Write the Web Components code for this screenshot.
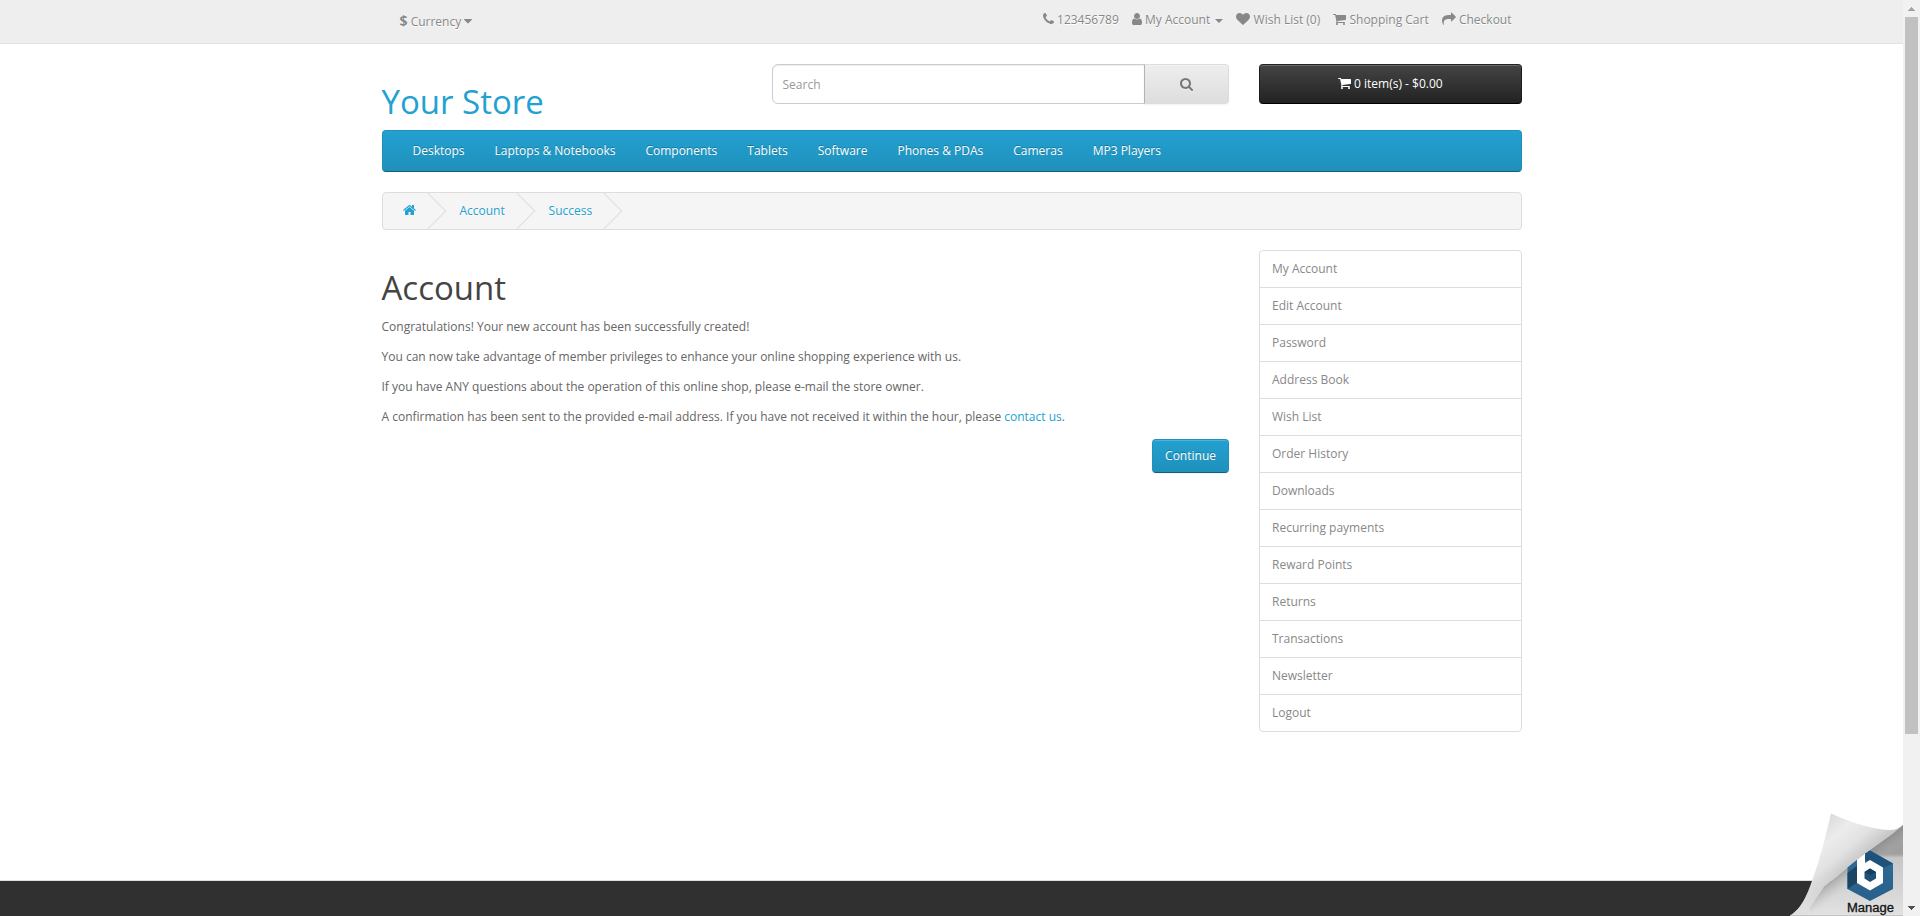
<!DOCTYPE html>
<html lang="en">
<head>
<meta charset="utf-8">
<title>Your Account Has Been Created!</title>
<style>
html,body{margin:0;padding:0;height:916px;overflow:hidden;background:#fff}
body{font:400 12px/20px "Open Sans",sans-serif;color:#666}
</style>
</head>
<body>
<store-page></store-page>
<script>
const ICONS = {
  phone:[192,1408,"M1600 1240q0 27-10 70.5t-21 68.5q-21 50-122 106-94 51-186 51-27 0-53-3.5t-57.5-12.5-47-14.5-55.5-20.5-49-18q-98-35-175-83-127-79-264-216t-216-264q-48-77-83-175-3-9-18-49t-20.5-55.5-14.5-47-12.5-57.5-3.5-53q0-92 51-186 56-101 106-122 25-11 68.5-21t70.5-10q14 0 21 3 18 6 53 76 11 19 30 54t35 63.5 31 53.5q3 4 17.5 25t21.5 35.5 7 28.5q0 20-28.5 50t-62 55-62 53-28.5 46q0 9 5 22.5t8.5 20.5 14 24 11.5 19q76 137 174 235t235 174q2 1 19 11.5t24 14 20.5 8.5 22.5 5q18 0 46-28.5t53-62 55-62 50-28.5q14 0 28.5 7t35.5 21.5 25 17.5q25 15 53.5 31t63.5 35 54 30q70 35 76 53 3 7 3 21z"],
  user:[256,1280,"M1536 1399q0 109-62.5 187t-150.5 78h-854q-88 0-150.5-78t-62.5-187q0-85 8.5-160.5t31.5-152 58.5-131 94-89 134.5-34.5q131 128 313 128t313-128q76 0 134.5 34.5t94 89 58.5 131 31.5 152 8.5 160.5zm-256-887q0 159-112.5 271.5t-271.5 112.5-271.5-112.5-112.5-271.5 112.5-271.5 271.5-112.5 271.5 112.5 112.5 271.5z"],
  heart:[0,1792,"M896 1664q-26 0-44-18l-624-602q-10-8-27.5-26t-55.5-65.5-68-97.5-53.5-121-23.5-138q0-220 127-344t351-124q62 0 126.5 21.5t120 58 95.5 68.5 76 68q36-36 76-68t95.5-68.5 120-58 126.5-21.5q224 0 351 124t127 344q0 221-229 450l-623 600q-18 18-44 18z"],
  cart:[64,1664,"M704 1536q0 52-38 90t-90 38-90-38-38-90 38-90 90-38 90 38 38 90zm896 0q0 52-38 90t-90 38-90-38-38-90 38-90 90-38 90 38 38 90zm128-1088v512q0 24-16.5 42.5t-40.5 21.5l-1044 122q13 60 13 70 0 16-24 64h920q26 0 45 19t19 45-19 45-45 19h-1024q-26 0-45-19t-19-45q0-11 8-31.5t16-36 21.5-40 15.5-29.5l-177-823h-204q-26 0-45-19t-19-45 19-45 45-19h256q16 0 28.5 6.5t19.5 15.5 13 24.5 8 26 5.5 29.5 4.5 26h1201q26 0 45 19t19 45z"],
  share:[0,1792,"M1792 640q0 26-19 45l-512 512q-19 19-45 19t-45-19-19-45v-256h-224q-98 0-175.5 6t-154 21.5-133 42.5-105.5 69.5-80 101-48.5 138.5-17.5 181q0 55 5 123 0 6 2.5 23.5t2.5 26.5q0 15-8.5 25t-23.5 10q-16 0-28-17-7-9-13-22t-13.5-30-10.5-24q-127-285-127-451 0-199 53-333 162-403 875-403h224v-256q0-26 19-45t45-19 45 19l512 512q19 19 19 45z"],
  search:[64,1664,"M1216 832q0-185-131.5-316.5t-316.5-131.5-316.5 131.5-131.5 316.5 131.5 316.5 316.5 131.5 316.5-131.5 131.5-316.5zm512 832q0 52-38 90t-90 38q-54 0-90-38l-343-342q-179 124-399 124-143 0-273.5-55.5t-225-150-150-225-55.5-273.5 55.5-273.5 150-225 225-150 273.5-55.5 273.5 55.5 225 150 150 225 55.5 273.5q0 220-124 399l343 343q37 37 37 90z"],
  home:[64,1664,"M1472 992v480q0 26-19 45t-45 19h-384v-384h-256v384h-384q-26 0-45-19t-19-45v-480q0-1 .5-3t.5-3l575-474 575 474q1 2 1 6zm223-69l-62 74q-8 9-21 11h-3q-13 0-21-7l-692-577-692 577q-12 8-24 7-13-2-21-11l-62-74q-8-10-7-23.5t11-21.5l719-599q32-26 76-26t76 26l244 204v-195q0-14 9-23t23-9h192q14 0 23 9t9 23v408l219 182q10 8 11 21.5t-7 23.5z"],
  caret:[384,1024,"M1408 704q0 26-19 45l-448 448q-19 19-45 19t-45-19l-448-448q-19-19-19-45t19-45 45-19h896q26 0 45 19t19 45z"]
};
function define(name, html){
  customElements.define(name, class extends HTMLElement{
    constructor(){
      super();
      const t=document.createElement('template');
      t.innerHTML=typeof html==='function'?html(this):html;
      this.attachShadow({mode:'open'}).append(t.content.cloneNode(true));
    }
  });
}
define('fa-icon', el=>{
  const [x,w,d]=ICONS[el.getAttribute('name')];
  return `<style>:host{display:inline-block;height:14px;width:${w/128}px;vertical-align:-2px;line-height:0}svg{display:block;width:100%;height:14px;overflow:visible;fill:currentColor}</style><svg viewBox="${x} 0 ${w} 1792"><path d="${d}"/></svg>`;
});
define('top-bar', `<style>
:host{display:block;box-sizing:border-box;height:44px;background:#eee;border-bottom:1px solid #e2e2e2;color:#888;text-shadow:0 1px 0 #fff}
.in{width:1140px;margin:0 auto;display:flex;justify-content:space-between}
.cur{padding:11px 0 0 18px;white-space:pre}
.cur b{font-size:14px;line-height:20px}
nav{display:flex;gap:13.1px;padding:10px 10px 0 0}
nav span{white-space:pre}
.caret{display:inline-block;border:4px solid transparent;border-top-color:currentColor;border-bottom:0;vertical-align:middle;margin-left:2px}
</style><div class="in"><div class="cur"><b>$</b> <span>Currency</span> <fa-icon name="caret"></fa-icon></div>
<nav><span><fa-icon name="phone"></fa-icon> 123456789</span><span><fa-icon name="user"></fa-icon> My Account <i class="caret"></i></span><span><fa-icon name="heart"></fa-icon> Wish List (0)</span><span><fa-icon name="cart"></fa-icon> Shopping Cart</span><span><fa-icon name="share"></fa-icon> Checkout</span></nav></div>`);
define('search-box', `<style>
:host{display:flex;height:40px}
.f{box-sizing:border-box;width:373px;border:1px solid #ccc;border-radius:6px 0 0 6px;box-shadow:inset 0 1px 1px rgba(0,0,0,.075);padding:10px;line-height:20px;color:#999}
.b{box-sizing:border-box;flex:1;margin-left:-1px;border:1px solid #ddd;border-left-color:#b3b3b3;border-radius:0 4px 4px 0;background:linear-gradient(#eee,#ddd);box-shadow:inset 0 1px 0 rgba(255,255,255,.2),0 1px 2px rgba(0,0,0,.05);display:flex;align-items:center;justify-content:center;color:#777}
fa-icon{filter:drop-shadow(0 1px 0 rgba(255,255,255,.5))}
</style><div class="f">Search</div><div class="b"><fa-icon name="search"></fa-icon></div>`);
define('cart-button', `<style>
:host{display:block;box-sizing:border-box;height:40px;border:1px solid #111;border-color:#222 #1c1c1c #000;border-radius:4px;background:linear-gradient(#444,#222);color:#fff;text-align:center;line-height:18px;padding-top:10px;box-shadow:inset 0 1px 0 rgba(255,255,255,.2)}
</style><fa-icon name="cart"></fa-icon> <slot></slot>`);
define('site-header', `<style>
:host{display:grid;grid-template-columns:390px 457.5px 262.5px;width:1140px;margin:20px auto 0;height:66px;align-items:start}
h1{margin:20px 0 0;font-size:33px;line-height:36.3px;font-weight:400;color:#23a1d1}
cart-button{margin-left:30px;width:262.5px}
</style><h1>Your Store</h1><search-box></search-box><cart-button>0 item(s) - $0.00</cart-button>`);
define('main-menu', `<style>
:host{box-sizing:border-box;display:flex;width:1140px;height:42px;margin:0 auto 20px;padding-left:15px;border:1px solid;border-color:#1f90bb #1f90bb #145e7a;border-radius:4px;background:linear-gradient(#23a1d1,#1f90bb)}
::slotted(span){padding:10px 15px;color:#fff;text-shadow:0 -1px 0 rgba(0,0,0,.25)}
</style><slot></slot>`);
define('crumb-item', `<style>
:host{display:block;position:relative;padding:8px 20px;color:#23a1d1;text-shadow:0 1px 0 #fff;height:20px}
:host::after{content:"";position:absolute;top:5px;right:-5px;width:26px;height:26px;box-sizing:border-box;border-right:1px solid #ddd;border-bottom:1px solid #ddd;transform:rotate(-45deg)}
</style><slot></slot>`);
define('crumb-bar', `<style>
:host{box-sizing:border-box;display:flex;gap:3.9px;width:1140px;height:38px;margin:0 auto 20px;border:1px solid #ddd;border-radius:4px;background:#f5f5f5;overflow:hidden}
</style><slot></slot>`);
define('account-message', `<style>
:host{display:block;width:847.5px}
h1{margin:20px 0 10.7px;font-size:33px;line-height:36.3px;font-weight:400;color:#444}
p{margin:0 0 10px;line-height:20px}
a{color:#23a1d1}
.r{display:flex;justify-content:flex-end;padding-top:2px}
.btn{box-sizing:border-box;height:34px;padding:7px 12px;line-height:18px;border:1px solid;border-color:#1f90bb #1f90bb #145e7a;border-radius:4px;color:#fff;text-shadow:0 -1px 0 rgba(0,0,0,.25);background:linear-gradient(#23a1d1,#1f90bb);box-shadow:inset 0 1px 0 rgba(255,255,255,.2),0 1px 2px rgba(0,0,0,.05)}
</style><h1>Account</h1>
<p>Congratulations! Your new account has been successfully created!</p>
<p>You can now take advantage of member privileges to enhance your online shopping experience with us.</p>
<p>If you have ANY questions about the operation of this online shop, please e-mail the store owner.</p>
<p>A confirmation has been sent to the provided e-mail address. If you have not received it within the hour, please <a>contact us</a>.</p>
<div class="r"><div class="btn">Continue</div></div>`);
define('side-list', `<style>
:host{display:block;box-sizing:border-box;width:262.5px;border:1px solid #ddd;border-radius:4px;align-self:start}
::slotted(span){display:block;padding:8px 12px;color:#888}
::slotted(span:not(:last-child)){border-bottom:1px solid #ddd}
</style><slot></slot>`);
define('page-curl', `<style>
:host{position:absolute;right:0;bottom:0;width:113px;height:103px}
svg{display:block}
text{font:12px "Liberation Sans",sans-serif;fill:#111;stroke:#111;stroke-width:.3}
</style><svg width="113" height="103" viewBox="0 0 113 103">
<defs>
<linearGradient id="u" x1="0" y1="0" x2="0" y2="1"><stop offset="0" stop-color="#9b9b9b"/><stop offset=".32" stop-color="#a0a0a0"/><stop offset=".36" stop-color="#c6c6c6"/><stop offset="1" stop-color="#e2e2e2"/></linearGradient>
<linearGradient id="s" gradientUnits="userSpaceOnUse" x1="61" y1="54" x2="70" y2="66"><stop offset="0" stop-color="#888" stop-opacity=".5"/><stop offset="1" stop-color="#bbb" stop-opacity="0"/></linearGradient>
<linearGradient id="c" gradientUnits="userSpaceOnUse" x1="24" y1="18" x2="62" y2="62"><stop offset="0" stop-color="#dcdcdc"/><stop offset=".3" stop-color="#ececec"/><stop offset=".6" stop-color="#e2e2e2"/><stop offset="1" stop-color="#bdbdbd"/></linearGradient>
<linearGradient id="f" gradientUnits="userSpaceOnUse" x1="0" y1="58" x2="0" y2="96"><stop offset="0" stop-color="#dedede" stop-opacity="0"/><stop offset="1" stop-color="#e0e0e0"/></linearGradient>
<linearGradient id="b" x1="0" y1="0" x2="0" y2="1"><stop offset="0" stop-color="#316b96"/><stop offset="1" stop-color="#27608b"/></linearGradient>
<clipPath id="k"><path d="M113 12C98 25 78 37 59 53L20 86 0 103H113z"/></clipPath>
</defs>
<path d="M113 12C98 25 78 37 59 53L34 74 0 103H113z" fill="url(#u)"/>
<path d="M113 12C98 25 78 37 59 53L34 74 20 86V103H113z" fill="url(#s)"/>
<g clip-path="url(#k)">
<path d="M80 37.500 103 50.500V76L80 88 57.500 76V50.500z" fill="url(#b)"/>
<path d="M57.500 60V76L68 69V52z" fill="#1b4565"/><path d="M80 37.500 103 50.500 93 55 73 46V41.500z" fill="#1f527a"/>
<path d="M67 45 75 40V50L80 47 93 54.500V70L80 77.500 67 70z" fill="#fff"/>
<path d="M80 55.500 86 59V65.500L80 69 74.500 65.500V59z" fill="#205078"/><path d="M80 55.500 86 59 80 62 74.500 59z" fill="#173e5c"/>
</g>
<path d="M41 .5C62 10 84 17 101 17C106 17 110 14 113 12C98 25 78 37 59 53L34 74 14 103H0C11 96 17 83 22 68C31 43 36 22 41 .5z" fill="url(#c)"/>
<path d="M59 53 34 74 14 103H0C11 96 17 83 22 68L25 58z" fill="url(#f)"/>
<path d="M0 102.500H113" stroke="#c4c4c4"/>
<text x="57" y="99" textLength="47" lengthAdjust="spacingAndGlyphs">Manage</text>
</svg>`);
define('scroll-bar', `<style>
:host{display:flex;flex-direction:column;align-items:center;justify-content:space-between;width:17px;height:916px;background:#f1f1f1}
i{width:13px;height:717px;background:#c1c1c1}
svg{display:block;width:17px;height:17px}
div{display:flex;flex-direction:column;align-items:center}
</style><div><svg shape-rendering="crispEdges"><path d="M5 11h7L8.500 7z" fill="#a3a3a3"/></svg><i></i></div><svg shape-rendering="crispEdges"><path d="M5 7h7L8.500 11z" fill="#505050"/></svg>`);
define('store-page', `<style>
:host{display:grid;grid-template-columns:1903px 17px;height:916px}
.p{position:relative;display:flex;flex-direction:column;height:916px;overflow:hidden}
.c{width:1140px;margin:0 auto;display:flex;justify-content:space-between}
footer{margin-top:auto;height:36px;background:#303030;border-top:1px solid #ddd;box-sizing:border-box}
</style><div class="p"><top-bar></top-bar><site-header></site-header>
<main-menu><span>Desktops</span><span>Laptops &amp; Notebooks</span><span>Components</span><span>Tablets</span><span>Software</span><span>Phones &amp; PDAs</span><span>Cameras</span><span>MP3 Players</span></main-menu>
<crumb-bar><crumb-item><fa-icon name="home"></fa-icon></crumb-item><crumb-item>Account</crumb-item><crumb-item>Success</crumb-item></crumb-bar>
<div class="c"><account-message></account-message><side-list><span>My Account</span><span>Edit Account</span><span>Password</span><span>Address Book</span><span>Wish List</span><span>Order History</span><span>Downloads</span><span>Recurring payments</span><span>Reward Points</span><span>Returns</span><span>Transactions</span><span>Newsletter</span><span>Logout</span></side-list></div>
<footer></footer><page-curl></page-curl></div><scroll-bar></scroll-bar>`);
</script>
</body>
</html>
